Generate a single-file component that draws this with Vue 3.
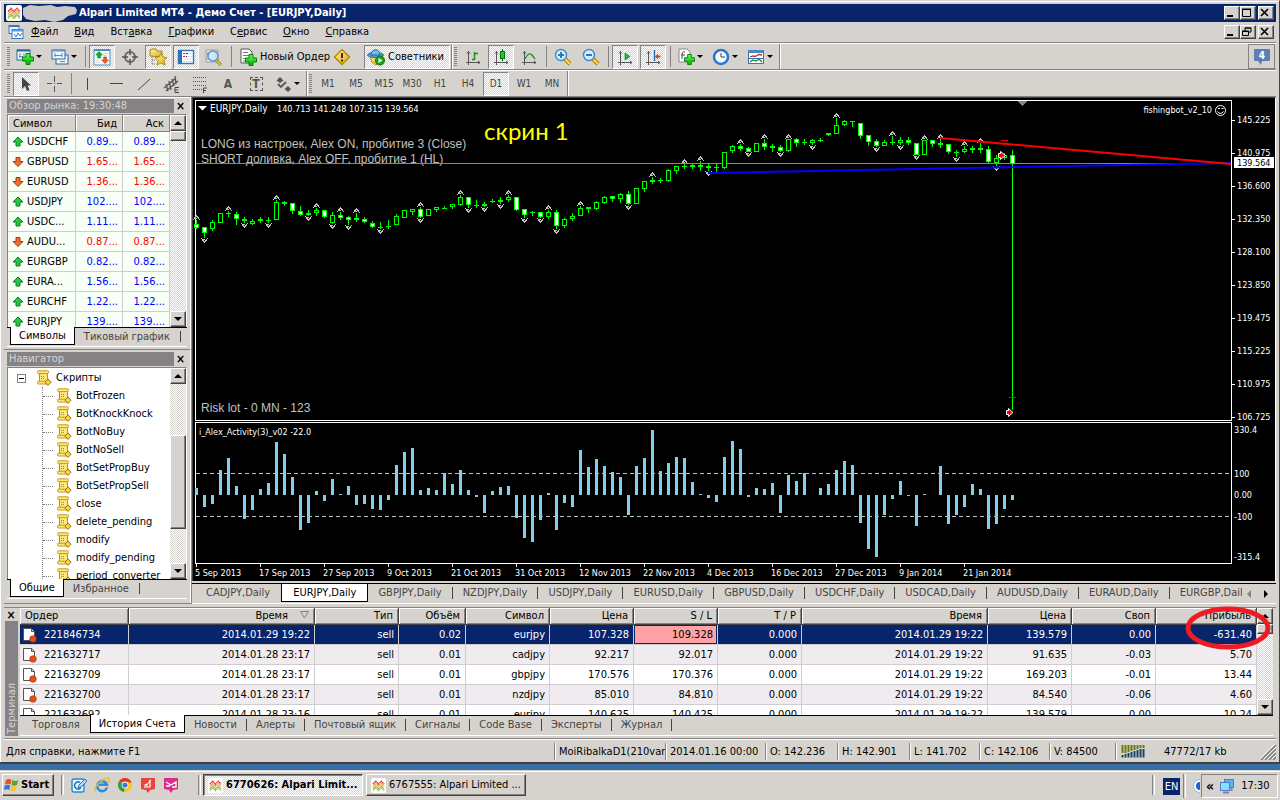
<script setup>
const menu = [
  ['', 'Ф', 'айл'], ['', 'В', 'ид'], ['Вст', 'а', 'вка'], ['', 'Г', 'рафики'],
  ['С', 'е', 'рвис'], ['', 'О', 'кно'], ['', 'С', 'правка'],
]
const timeframes = ['M1', 'M5', 'M15', 'M30', 'H1', 'H4', 'D1', 'W1', 'MN']
const drawTools = ['vline', 'hline', 'trend', 'channel', 'fibo', 'letter', 'label']
const quotes = [
  ['USDCHF', '0.89...', 1], ['GBPUSD', '1.65...', 0], ['EURUSD', '1.36...', 0],
  ['USDJPY', '102....', 1], ['USDC...', '1.11...', 1], ['AUDU...', '0.87...', 0],
  ['EURGBP', '0.82...', 1], ['EURA...', '1.56...', 1], ['EURCHF', '1.22...', 1],
  ['EURJPY', '139....', 1],
]
const scripts = [
  'BotFrozen', 'BotKnockKnock', 'BotNoBuy', 'BotNoSell', 'BotSetPropBuy', 'BotSetPropSell',
  'close', 'delete_pending', 'modify', 'modify_pending', 'period_converter',
]
const chartTabs = [
  'CADJPY', 'EURJPY', 'GBPJPY', 'NZDJPY', 'USDJPY', 'EURUSD',
  'GBPUSD', 'USDCHF', 'USDCAD', 'AUDUSD', 'EURAUD', 'EURGBP',
]
const columns = ['Ордер', 'Время', 'Тип', 'Объём', 'Символ', 'Цена', 'S / L', 'T / P', 'Время', 'Цена', 'Своп', 'Прибыль']
const orders = [
  ['221846734', '2014.01.29 19:22', 'sell', '0.02', 'eurjpy', '107.328', '109.328', '0.000', '2014.01.29 19:22', '139.579', '0.00', '-631.40'],
  ['221632717', '2014.01.28 23:17', 'sell', '0.01', 'cadjpy', '92.217', '92.017', '0.000', '2014.01.29 19:22', '91.635', '-0.03', '5.70'],
  ['221632709', '2014.01.28 23:17', 'sell', '0.01', 'gbpjpy', '170.576', '170.376', '0.000', '2014.01.29 19:22', '169.203', '-0.01', '13.44'],
  ['221632700', '2014.01.28 23:17', 'sell', '0.01', 'nzdjpy', '85.010', '84.810', '0.000', '2014.01.29 19:22', '84.540', '-0.06', '4.60'],
  ['221632692', '2014.01.28 23:16', 'sell', '0.01', 'eurjpy', '140.625', '140.425', '0.000', '2014.01.29 19:22', '139.579', '0.00', '10.24'],
]
const terminalTabs = ['Торговля', 'История Счета', 'Новости', 'Алерты', 'Почтовый ящик', 'Сигналы', 'Code Base', 'Эксперты', 'Журнал']

// Candles: type (w filled, h hollow, d doji), body top, body bottom, high, low, fractal marks; in thirds of a pixel from y 95
const candles = `w 386 398 375 403 u;w 395 415 395 428 d;h 382 402 375 407;h 353 383 353 383;d 354 357 347 365 u;w 357 373 352 390;d 373 378 365 383 d;h 379 386 373 389;h 373 379 367 383;d 376 379 367 383 d;h 320 374 315 374 u;w 322 328 317 333;w 325 349 325 356;w 348 359 333 363;d 353 359 346 363 d;h 346 355 338 362 u;w 346 365 346 368;h 360 385 352 388 d;w 361 370 352 374 u;w 367 375 362 390 d;h 369 375 355 382 u;w 371 380 366 385;w 385 397 379 399;d 396 399 380 402 d;d 392 395 376 402;h 364 391 357 391;h 346 369 346 369;h 343 352 343 359;w 342 365 337 370 ud;h 342 364 342 364;h 337 345 337 352;d 338 341 332 343;h 328 337 328 343;h 306 329 300 333 u;w 307 331 307 340 d;d 330 333 316 340;d 327 332 322 337 d;d 317 320 312 323;h 314 321 306 327 d;h 307 315 300 320 u;w 307 345 307 349;w 343 360 343 368 d;d 351 354 349 362;w 352 367 352 369 d;h 350 367 345 371 u;w 350 393 345 402 d;h 373 394 368 398;h 362 371 354 377;h 338 362 333 362 u;d 336 341 336 353;h 321 342 318 345;h 306 324 303 327;w 303 311 303 320;h 297 312 294 323;w 297 327 288 330 d;h 280 326 280 326;h 258 282 258 290;d 255 261 245 266 u;d 256 259 249 264;h 225 258 222 261;h 213 228 213 236;d 213 216 206 222 u;d 210 216 203 222;d 210 216 198 227 u;d 213 219 205 228 d;d 216 219 205 230;h 171 219 171 222;h 153 168 150 174;w 153 162 148 167 u;w 159 172 156 172 d;h 144 170 144 170;w 144 155 133 165 u;d 153 159 147 171;w 155 168 150 172 d;h 132 168 132 171 u;w 132 143 129 155;d 141 144 132 150;h 136 145 133 150 d;d 135 138 129 141;d 114 120 114 123;h 90 117 70 117 u;h 78 90 75 93;d 78 81 78 96;w 84 123 84 132;w 121 141 121 152;w 138 153 132 157 d;h 141 153 135 153;d 141 144 123 150 u;h 136 143 126 149 d;w 136 144 126 150;w 144 180 144 180 d;h 135 180 135 180 u;w 136 147 136 155;d 144 150 132 158 u;w 147 171 147 177;d 170 175 165 185 d;h 162 171 153 175 u;d 159 165 152 174;d 159 165 145 174 u;w 162 200 153 205;h 189 204 180 213 d;h 180 190 174 195;w 180 207 165 945`
  .split(';')
  .map((row, i) => {
    const [type, ...rest] = row.split(' ')
    const [top, bottom, high, low] = rest.slice(0, 4).map((v) => Math.round(Number(v) / 3) + 95)
    return { x: 196 + 8 * i, type, top, bottom: Math.max(bottom, top + 1), high, low, marks: rest[4] || '' }
  })

// End of each activity bar in thirds of a pixel; 300 is the zero level
const bars = '278 336 327 225 189 273 372 345 282 264 141 177 246 405 384 288 318 252 297 273 330 327 342 345 315 210 171 159 285 279 285 235 267 225 285 306 354 288 276 273 369 429 441 375 294 405 324 336 165 216 192 213 231 246 360 213 189 105 228 204 186 189 261 297 309 321 186 138 162 306 279 282 264 354 240 258 235 300 279 267 225 198 210 384 462 486 360 312 258 303 393 297 300 213 387 360 336 267 282 402 387 342 315'
  .split(' ')
  .map((v, i) => {
    const end = Math.round(Number(v) / 3) + 395
    return { x: 195 + 8 * i, y: Math.min(end, 495), h: Math.abs(end - 495) }
  })

const prices = ['145.225', '140.975', '136.600', '132.350', '128.100', '123.850', '119.475', '115.225', '110.975', '106.725']
const dates = [
  '5 Sep 2013', '17 Sep 2013', '27 Sep 2013', '9 Oct 2013', '21 Oct 2013', '31 Oct 2013', '12 Nov 2013',
  '22 Nov 2013', '4 Dec 2013', '16 Dec 2013', '27 Dec 2013', '9 Jan 2014', '21 Jan 2014',
]
</script>

<template>
  <svg class="defs" aria-hidden="true">
    <defs>
      <linearGradient id="gold" x1="0" y1="0" x2="1" y2="1"><stop offset="0" stop-color="#fff3a0" /><stop offset="1" stop-color="#e0aa10" /></linearGradient>
      <linearGradient id="green" x1="0" y1="0" x2="0" y2="1"><stop offset="0" stop-color="#5dff5d" /><stop offset="1" stop-color="#00b000" /></linearGradient>
      <symbol id="logo" viewBox="0 0 16 16">
        <rect width="16" height="16" rx="2" fill="#fff" />
        <path d="M2 6.500l3-3 3 3 3-3 3 3" fill="none" stroke="#e03020" stroke-width="1.600" stroke-dasharray="1.500 .5" />
        <path d="M2 9l3-3 3 3 3-3 3 3" fill="none" stroke="#f0902c" stroke-width="1.300" stroke-dasharray="1.500 .5" />
        <path d="M2 11.500l3-3 3 3 3-3 3 3M2 13.500l3-3 3 3 3-3 3 3" fill="none" stroke="#90b848" stroke-width="1.300" stroke-dasharray="1.500 .5" />
      </symbol>
      <symbol id="plus" viewBox="0 0 12 12"><path d="M4 .5h4v3.500h3.500v4H8v3.500H4V8H.5V4H4z" fill="url(#green)" stroke="#008400" /></symbol>
      <symbol id="newchart" viewBox="0 0 18 18">
        <rect x="1" y="2" width="13" height="10" fill="#eaf6ff" stroke="#31699c" /><path d="M1 2.500h13" stroke="#31699c" stroke-width="2" />
        <path d="M4 5v5M3 8.500h4M8 5v3" stroke="#688aa8" /><use href="#plus" x="6" y="5" width="12" height="12" />
      </symbol>
      <symbol id="profiles" viewBox="0 0 18 18">
        <rect x="5" y="7" width="12" height="9" fill="#eaf6ff" stroke="#31699c" /><rect x="1" y="2" width="13" height="9" fill="#eaf6ff" stroke="#31699c" /><path d="M1 2.500h13" stroke="#5f98cc" stroke-width="2" />
        <path d="M4 5v4M3 7.500h8M11 5v4M9 13.500h5" stroke="#688aa8" />
      </symbol>
      <symbol id="market" viewBox="0 0 18 18">
        <rect x="1" y="2" width="16" height="15" fill="#f4faff" stroke="#4a90cc" /><path d="M1 2h16" stroke="#4a90cc" stroke-width="2" /><path d="M10 5.500h5M10 7.500h4M3 12.500h3M3 14.500h4" stroke="#d0d8e0" />
        <path d="M6 3.500L2.800 7h2v3h2.600V7h2z" fill="#18b018" stroke="#087808" stroke-width=".6" /><path d="M12 15.500L8.800 12h2V9h2.600v3h2z" fill="#f06030" stroke="#a82800" stroke-width=".6" />
      </symbol>
      <symbol id="target" viewBox="0 0 18 18"><circle cx="9" cy="9" r="5" fill="none" stroke="#666" stroke-width="2" /><path d="M9 1v6M9 11v6M1 9h6M11 9h6" stroke="#555" stroke-width="1.500" /></symbol>
      <symbol id="folder" viewBox="0 0 18 18">
        <path d="M1 8V2l2-1h4l1 2h5v6z" fill="url(#gold)" stroke="#a88418" /><path d="M3 9v7M3 12h4M3 16h4" stroke="#666" stroke-dasharray="1 1" />
        <path d="M12 5l2 4 4 .5-3 3 1 4.500-4-2-4 2 1-4.500-3-3 4-.5z" fill="url(#gold)" stroke="#a87800" stroke-width=".8" />
      </symbol>
      <symbol id="terminal" viewBox="0 0 18 18"><rect x="1.500" y="2.500" width="15" height="13" fill="#fff" stroke="#2f76c0" stroke-width="1.400" /><path d="M3.500 3v12" stroke="#2870b8" stroke-width="3" /><path d="M6 5.500h10M6 8.500h10M6 11h10M6 13.500h10" stroke="#cfe0ff" /><path d="M6 5.500h2M6 8.500h2" stroke="#e02020" /><path d="M9 5.500h2M9 8.500h1" stroke="#333" /></symbol>
      <symbol id="tester" viewBox="0 0 18 18">
        <path d="M1 2h12v12H1z" fill="#eee" stroke="#999" /><path d="M3 4v8M2 6h3M11 3v7" stroke="#777" /><path d="M11 12l5 5" stroke="#a87818" stroke-width="3" /><path d="M11 12l5 5" stroke="#f4c838" stroke-width="1.200" />
        <circle cx="8" cy="8" r="5" fill="#c4e6fc" fill-opacity=".85" stroke="#5b92c8" stroke-width="1.300" />
      </symbol>
      <symbol id="neworder" viewBox="0 0 18 18"><path d="M2 1h8l3 3v11H2z" fill="#fff" stroke="#555" /><path d="M4 4.500h5M4 7.500h7M4 10.500h5M4 13h3" stroke="#777" /><use href="#plus" x="6" y="6" width="12" height="12" /></symbol>
      <symbol id="alert" viewBox="0 0 18 18"><path d="M9 1.500L16.500 9 9 16.500 1.500 9z" fill="url(#gold)" stroke="#c08800" stroke-width="1.500" stroke-linejoin="round" /><path d="M9 5v5M9 11.500v2" stroke="#333" stroke-width="2" /></symbol>
      <symbol id="advisor" viewBox="0 0 18 18">
        <path d="M3 8h11l-2 6-3 3-4-3z" fill="url(#gold)" stroke="#b88810" /><ellipse cx="8.500" cy="7" rx="8" ry="2.500" fill="#4f9fd0" stroke="#2b6b99" /><path d="M4 7c0-7 9-7 9 0z" fill="#72bce6" stroke="#2b6b99" />
        <circle cx="13" cy="12.500" r="4.500" fill="#18a818" stroke="#087008" /><path d="M11.500 10v5l4-2.500z" fill="#fff" />
      </symbol>
      <symbol id="axes" viewBox="0 0 18 18"><path d="M4.500 3v14M2 14.500h14M3 5.500l1.500-2 1.500 2M14 13l2 1.500-2 1.500" fill="none" stroke="#555" /></symbol>
      <symbol id="barchart" viewBox="0 0 18 18"><use href="#axes" /><path d="M10.500 4v8M8 11.500h2M11 5.500h3" stroke="#109010" stroke-width="1.400" /></symbol>
      <symbol id="candlechart" viewBox="0 0 18 18"><use href="#axes" /><path d="M10.500 1v12" stroke="#006800" /><rect x="8.500" y="3.500" width="4" height="7" fill="#20c840" stroke="#007800" /></symbol>
      <symbol id="linechart" viewBox="0 0 18 18"><use href="#axes" /><path d="M5 11c3-6 5-6 7-4l3 4" fill="none" stroke="#189030" stroke-width="1.300" /></symbol>
      <symbol id="lens" viewBox="0 0 18 18"><path d="M11 11l5 5" stroke="#a87818" stroke-width="4" /><path d="M11 11l5 5" stroke="#ffe048" stroke-width="2" /><circle cx="7" cy="7" r="5.500" fill="#d4efff" stroke="#3f88c8" stroke-width="1.400" /></symbol>
      <symbol id="zoomin" viewBox="0 0 18 18"><use href="#lens" /><path d="M7 4v6M4 7h6" stroke="#2f78b8" stroke-width="2" /></symbol>
      <symbol id="zoomout" viewBox="0 0 18 18"><use href="#lens" /><path d="M4 7h6" stroke="#2f78b8" stroke-width="2" /></symbol>
      <symbol id="scroll" viewBox="0 0 18 18"><use href="#axes" /><path d="M9 5l5 3.500-5 3.500z" fill="#20b840" stroke="#087818" stroke-width=".6" /></symbol>
      <symbol id="shift" viewBox="0 0 18 18"><use href="#axes" /><path d="M10.500 2v11" stroke="#2868a8" stroke-width="1.400" /><path d="M11 8.500l3-3v2h2.500v2H14v2z" fill="#d04818" /></symbol>
      <symbol id="indicator" viewBox="0 0 18 18"><path d="M2 1h8l3 3v10H2z" fill="#fff" stroke="#888" /><path d="M8 4c-3-1-3 1-3 7M4 7h4" fill="none" stroke="#444" /><use href="#plus" x="7" y="6" width="11" height="11" /></symbol>
      <symbol id="clock" viewBox="0 0 18 18"><circle cx="9" cy="9" r="7" fill="#f4faff" stroke="#2478d0" stroke-width="2.500" /><path d="M9 5v4h4" fill="none" stroke="#444" /></symbol>
      <symbol id="template" viewBox="0 0 18 18"><rect x="1.500" y="2.500" width="15" height="13" fill="#fff" stroke="#3078b8" /><path d="M1 3.500h16" stroke="#4888c8" stroke-width="3" /><path d="M3 9l3-1 2 .5 4-2 3 .5" fill="none" stroke="#c03020" stroke-width="1.300" /><path d="M1 10.500h16" stroke="#3078b8" /><path d="M3 14l3-2 3 1 3-2 3 3" fill="none" stroke="#208030" stroke-width="1.200" /></symbol>
      <symbol id="cursor" viewBox="0 0 18 18"><path d="M5 2v12l3-3 2 5 2.500-1-2-4.500H14z" fill="#444" /></symbol>
      <symbol id="cross" viewBox="0 0 18 18"><path d="M9.500 1v6M9.500 11v6M2 8.500h5M12 8.500h5" stroke="#555" /><path d="M9 8.500h1" stroke="#555" /></symbol>
      <symbol id="vline" viewBox="0 0 18 18"><path d="M8.500 3v12" stroke="#444" /></symbol>
      <symbol id="hline" viewBox="0 0 18 18"><path d="M3 8.500h13" stroke="#444" /></symbol>
      <symbol id="trend" viewBox="0 0 18 18"><path d="M3 15L15 4" stroke="#444" /></symbol>
      <symbol id="channel" viewBox="0 0 18 18"><path d="M1 13L13 3M3 16L15 6M3 9l2 7M6 6l2 9M9 4l2 7M12 1l1 8" stroke="#555" stroke-width="1.300" /><path d="M16 12.500h-4v5h4M12 15h3" fill="none" stroke="#444" /></symbol>
      <symbol id="fibo" viewBox="0 0 18 18"><path d="M2 2.500h14M2 6.500h14M2 10.500h14M2 14.500h9" stroke="#555" stroke-dasharray="1 1" /><path d="M12.500 18v-5H16M12.500 15.500H15" fill="none" stroke="#444" /></symbol>
      <symbol id="arrows" viewBox="0 0 18 18"><path d="M6 2l3.500 3.500L6 8 2.500 5.500zM14 11l3 3-3 3-3.500-3z" fill="#555" /><path d="M4 9l3 3 5-5" fill="none" stroke="#555" stroke-width="1.800" /></symbol>
      <symbol id="quoteup" viewBox="0 0 12 12"><path d="M6 1l5 5H8v4H4V6H1z" fill="#28c840" stroke="#107828" /></symbol>
      <symbol id="quotedown" viewBox="0 0 12 12"><path d="M6 10.500l5-5H8v-4H4v4H1z" fill="#f07030" stroke="#a83810" /></symbol>
      <symbol id="script" viewBox="0 0 16 16">
        <path d="M3.500 3h8v9h-8z" fill="#ffe878" stroke="#c09018" /><rect x="1.500" y=".8" width="11" height="2.800" rx="1" fill="#ffe878" stroke="#c89820" /><rect x="1.500" y="11.200" width="11" height="2.800" rx="1" fill="#ffe878" stroke="#c89820" />
        <path d="M5 6.500h4M5 8.500h4" stroke="#a88020" stroke-dasharray="1 1" /><path d="M12 9l3 3.200-3 3.200-3-3.200z" fill="#ffd838" stroke="#987010" />
      </symbol>
      <symbol id="order" viewBox="0 0 16 16"><path d="M1.500 1.500h8l3 3v9h-11z" fill="#fff" stroke="#555" /><path d="M9.500 1.500v3h3" fill="none" stroke="#555" /><circle cx="11" cy="12" r="3.300" fill="#e84c18" stroke="#a83008" stroke-width=".6" /></symbol>
      <symbol id="chartwin" viewBox="0 0 16 16"><rect x="1" y="1.500" width="10" height="8" fill="#eaf4ff" stroke="#3878c8" /><path d="M1 2h10" stroke="#3878c8" stroke-width="2" /><rect x="4" y="5.500" width="11" height="9" fill="#fff" stroke="#3878c8" /><path d="M4 6.500h11" stroke="#5898e0" stroke-width="2" /><path d="M6 10l2 3 2-4 2 3 2-3" fill="none" stroke="#3878c8" /></symbol>
      <symbol id="fractal" viewBox="-4 -3 9 6" overflow="visible"><path d="M0-3h1v1H0zM-1-2h3v1h-3zM-2-1h2v1h-2zM1-1h2v1H1zM-2 0h1v1h-1zM0 0h1v1H0zM2 0h1v1H2zM-3 1h1v1h-1zM3 1h1v1H3zM-1 0h1v1h-1zM1-1h1v1H1z" fill="#c0c0c0" /></symbol>
    </defs>
  </svg>

  <div class="desktop">
    <div class="window">
      <header class="title">
        <svg class="i16"><use href="#logo" /></svg>
        <svg class="smudge" viewBox="0 0 54 18"><path d="M0 4l7-3 9 1 12-1 6 2 8-1 10 1 2 3-1 4-8 2-5 4-9 2-9-2-10 1-9-2-3-4z" fill="#c8c8c8" /></svg>
        <h1>Alpari Limited MT4 - Демо Счет - [EURJPY,Daily]</h1>
        <div class="winbtns">
          <button aria-label="Свернуть"><svg viewBox="0 0 12 10"><path d="M2 8h6" stroke="#000" stroke-width="2" /></svg></button>
          <button aria-label="Развернуть"><svg viewBox="0 0 12 10"><path d="M1.500 1.500h8v7h-8zM1 1h9" fill="none" stroke="#000" /></svg></button>
          <button class="close" aria-label="Закрыть"><svg viewBox="0 0 12 10"><path d="M2 1l7 7M9 1L2 8" stroke="#000" stroke-width="1.600" /></svg></button>
        </div>
      </header>

      <nav class="menu">
        <svg class="i16"><use href="#chartwin" /></svg>
        <button v-for="m in menu" :key="m[2]">{{ m[0] }}<u>{{ m[1] }}</u>{{ m[2] }}</button>
        <div class="winbtns">
          <button aria-label="Свернуть график"><svg viewBox="0 0 12 10"><path d="M2 8h6" stroke="#000" stroke-width="2" /></svg></button>
          <button aria-label="Восстановить график"><svg viewBox="0 0 12 10"><path d="M4 4V1h6v4H8M1.500 4.500h6v4h-6zM1 4h7M4 1h6" fill="none" stroke="#000" /></svg></button>
          <button class="close" aria-label="Закрыть график"><svg viewBox="0 0 12 10"><path d="M2 1l7 7M9 1L2 8" stroke="#000" stroke-width="1.600" /></svg></button>
        </div>
      </nav>

      <div class="bars">
        <div class="bar">
          <div class="group">
            <i class="grip"></i>
            <button class="tool drop" aria-label="Новый график"><svg><use href="#newchart" /></svg><i class="caret"></i></button>
            <button class="tool drop" aria-label="Профили"><svg><use href="#profiles" /></svg><i class="caret"></i></button>
            <i class="sep"></i>
            <button class="tool on" aria-label="Обзор рынка"><svg><use href="#market" /></svg></button>
            <button class="tool" aria-label="Окно данных"><svg><use href="#target" /></svg></button>
            <button class="tool on" aria-label="Навигатор"><svg><use href="#folder" /></svg></button>
            <button class="tool on" aria-label="Терминал"><svg><use href="#terminal" /></svg></button>
            <button class="tool" aria-label="Тестер"><svg><use href="#tester" /></svg></button>
            <i class="sep"></i>
            <button class="tool order"><svg><use href="#neworder" /></svg>Новый Ордер</button>
            <button class="tool" aria-label="Редактор"><svg><use href="#alert" /></svg></button>
            <button class="tool on advisor"><svg><use href="#advisor" /></svg>Советники</button>
          </div>
          <div class="group">
            <i class="grip"></i>
            <button class="tool" aria-label="Бары"><svg><use href="#barchart" /></svg></button>
            <button class="tool on" aria-label="Свечи"><svg><use href="#candlechart" /></svg></button>
            <button class="tool" aria-label="Линия"><svg><use href="#linechart" /></svg></button>
            <i class="sep"></i>
            <button class="tool" aria-label="Увеличить"><svg><use href="#zoomin" /></svg></button>
            <button class="tool" aria-label="Уменьшить"><svg><use href="#zoomout" /></svg></button>
            <i class="sep"></i>
            <button class="tool on" aria-label="Автопрокрутка"><svg><use href="#scroll" /></svg></button>
            <button class="tool on" aria-label="Сдвиг графика"><svg><use href="#shift" /></svg></button>
            <i class="sep"></i>
            <button class="tool drop" aria-label="Индикаторы"><svg><use href="#indicator" /></svg><i class="caret"></i></button>
            <button class="tool drop" aria-label="Периоды"><svg><use href="#clock" /></svg><i class="caret"></i></button>
            <button class="tool drop" aria-label="Шаблоны"><svg><use href="#template" /></svg><i class="caret"></i></button>
          </div>
          <button class="chat" aria-label="Сообщения"><svg viewBox="0 0 18 18"><path d="M1 2q0-1 1-1h14q1 0 1 1v10q0 1-1 1H9l-1 4-3-4H2q-1 0-1-1z" fill="#5b7fb5" /><text x="9" y="11">4</text></svg></button>
        </div>
        <div class="bar second">
          <div class="group">
            <i class="grip"></i>
            <button class="tool on" aria-label="Курсор"><svg><use href="#cursor" /></svg></button>
            <button class="tool" aria-label="Перекрестие"><svg><use href="#cross" /></svg></button>
            <i class="sep"></i>
            <button v-for="t in drawTools" :key="t" class="tool" :aria-label="t">
              <b v-if="t === 'letter'">A</b>
              <b v-else-if="t === 'label'" class="tbox">T</b>
              <svg v-else><use :href="'#' + t" /></svg>
            </button>
            <button class="tool drop" aria-label="Стрелки"><svg><use href="#arrows" /></svg><i class="caret"></i></button>
          </div>
          <div class="group">
            <i class="grip"></i>
            <button v-for="t in timeframes" :key="t" class="tool tf" :class="{ on: t === 'D1' }">{{ t }}</button>
          </div>
        </div>
      </div>

      <main class="work">
        <aside class="side">
          <section class="panel">
            <div class="phead"><h2>Обзор рынка: 19:30:48</h2><button aria-label="Закрыть обзор рынка">×</button></div>
            <div class="plist market">
              <div class="scrolled">
                <table class="quotes">
                  <colgroup><col class="c1" /><col class="c2" /><col class="c3" /></colgroup>
                  <thead><tr><th>Символ</th><th>Бид</th><th>Аск</th></tr></thead>
                  <tbody>
                    <tr v-for="q in quotes" :key="q[0]" :class="q[2] ? 'up' : 'down'">
                      <td><svg><use :href="q[2] ? '#quoteup' : '#quotedown'" /></svg>{{ q[0] }}</td><td>{{ q[1] }}</td><td>{{ q[1] }}</td>
                    </tr>
                  </tbody>
                </table>
              </div>
              <div class="vscroll"><button aria-label="Вверх"><i class="up"></i></button><i class="thumb small"></i><span></span><button aria-label="Вниз"><i class="dn"></i></button></div>
            </div>
            <div class="ptabs"><button class="active">Символы</button><button>Тиковый график</button></div>
          </section>
          <section class="panel nav">
            <div class="phead"><h2>Навигатор</h2><button aria-label="Закрыть навигатор">×</button></div>
            <div class="plist">
              <div class="scrolled">
                <div class="tree">
                  <div class="root"><i class="minus"></i><svg><use href="#script" /></svg>Скрипты</div>
                  <ul><li v-for="s in scripts" :key="s"><svg><use href="#script" /></svg>{{ s }}</li></ul>
                </div>
              </div>
              <div class="vscroll"><button aria-label="Вверх по дереву"><i class="up"></i></button><span class="gap"></span><i class="thumb"></i><span></span><button aria-label="Вниз по дереву"><i class="dn"></i></button></div>
            </div>
            <div class="ptabs"><button class="active">Общие</button><button>Избранное</button></div>
          </section>
        </aside>

        <section class="chartbox">
          <svg class="chart" viewBox="193 98 1082 483" role="img" aria-label="EURJPY,Daily">
            <rect x="193" y="98" width="1082" height="483" fill="#000" />
            <g class="note">
              <text x="201" y="148">LONG из настроек, Alex ON, пробитие 3 (Close)</text>
              <text x="201" y="163">SHORT доливка, Alex OFF, пробитие 1 (HL)</text>
              <text x="201" y="412">Risk lot - 0 MN - 123</text>
            </g>
            <text class="shot" x="484" y="140">скрин 1</text>
            <g class="crisp">
              <path d="M195 100h1037v1H195zM195 420h1037v1H195zM195 422h1037v1H195zM195 563h1037v1H195zM195 100h1v321h-1zM195 422h1v142h-1zM1231 100h1v321h-1zM1231 422h1v142h-1z" fill="#fff" />
              <path d="M196 163h1035v1H196z" fill="#778899" />
              <path d="M1018 101h9l-4.500 5z" fill="#778899" />
              <template v-for="c in candles" :key="c.x">
                <rect :x="c.x" :y="c.high" width="1" :height="c.low - c.high" fill="#0f0" />
                <rect :x="c.x - 2" :y="c.top" width="5" :height="c.bottom - c.top" fill="#0f0" />
                <rect v-if="c.type !== 'd' && c.bottom - c.top > 2" :x="c.x - 1" :y="c.top + 1" width="3" :height="c.bottom - c.top - 2" :fill="c.type === 'w' ? '#fff' : '#000'" />
                <use v-if="c.marks.includes('u')" href="#fractal" :x="c.x - 4" :y="c.high - 5" width="9" height="6" />
                <g v-if="c.marks.includes('d')" :transform="`translate(0 ${2 * c.low + 5}) scale(1 -1)`"><use href="#fractal" :x="c.x - 4" :y="c.low" width="9" height="6" /></g>
              </template>
              <path d="M1001 140h7v1h-7zM1009 397h7v1h-7z" fill="#f00" />
            </g>
            <g fill="none" stroke-width="2"><path d="M708 173L1231 163" stroke="#00f" /><path d="M940 138L1231 164" stroke="#f00" /></g>
            <g fill="#f00" stroke="#fff">
              <path d="M998.500 153.500h2v-2l5 4-5 4v-2h-2z" /><path d="M1006.500 410.500h2v-2l4.500 4-4.500 4v-2h-2z" />
            </g>
            <path d="M198 106h9l-4.500 4.500z" fill="#fff" />
            <path d="M196 473.500h1035M196 516.500h1035" stroke="#c0c0c0" stroke-dasharray="4 3" />
            <g class="crisp" fill="#87ceeb"><rect v-for="b in bars" :key="b.x" :x="b.x" :y="b.y" width="3" :height="b.h" /></g>
            <g class="ctext">
              <text class="wide" x="210" y="112">EURJPY,Daily</text><text x="277" y="112">140.713 141.248 107.315 139.564</text>
              <text x="1212" y="113" text-anchor="end">fishingbot_v2_10</text>
              <text x="199" y="435">i_Alex_Activity(3)_v02 -22.0</text>
              <text v-for="(p, i) in prices" :key="p" x="1237" :y="123 + 33 * i">{{ p }}</text>
              <text x="1234" y="433">330.4</text><text x="1234" y="477">100</text><text x="1234" y="498">0.00</text><text x="1234" y="520">-100</text><text x="1234" y="560">-315.4</text>
              <text v-for="(d, i) in dates" :key="d" :x="195 + 64 * i" y="576">{{ d }}</text>
            </g>
            <g fill="none" stroke="#fff"><circle cx="1220.500" cy="110.500" r="5" /><path d="M1217.500 111.500q3 4 6 0M1218 108.500h2M1221.500 108.500h2" /></g>
            <g class="crisp" fill="#fff">
              <rect v-for="(p, i) in prices" :key="p" x="1232" :y="120 + 33 * i" width="3" height="1" />
              <rect v-for="(d, i) in dates" :key="d" :x="196 + 64 * i" y="564" width="1" height="3" />
              <rect x="1234" y="157" width="40" height="11" />
            </g>
            <text class="now" x="1237" y="166">139.564</text>
          </svg>
          <div class="ctabs">
            <div class="ctlist"><button v-for="t in chartTabs" :key="t" :class="{ active: t === 'EURJPY' }">{{ t }},Daily</button></div>
            <button class="arr off" aria-label="Предыдущие вкладки"></button><button class="arr" aria-label="Следующие вкладки"></button>
          </div>
        </section>
      </main>

      <section class="terminal">
        <div class="strip"><button aria-label="Закрыть терминал">×</button><h2>Терминал</h2></div>
        <div class="tbody">
          <div class="tview">
            <div class="scrolled">
              <table class="orders">
                <colgroup>
                  <col class="w109" /><col class="w186" /><col class="w84" /><col class="w67" /><col class="w84" /><col class="w84" /><col class="w84" /><col class="w84" /><col class="w186" /><col class="w84" /><col class="w84" /><col />
                </colgroup>
                <thead><tr><th v-for="(c, i) in columns" :key="i">{{ c }}<svg v-if="i === 1" viewBox="0 0 9 8"><path d="M.5.5h8L4.500 7z" fill="#d6d3ce" stroke="#848284" /></svg></th></tr></thead>
                <tbody>
                  <tr v-for="(o, r) in orders" :key="o[0]" :class="{ sel: r === 0 }">
                    <td v-for="(v, i) in o" :key="i" :class="{ hit: r === 0 && i === 6 }"><svg v-if="i === 0"><use href="#order" /></svg>{{ v }}</td>
                  </tr>
                </tbody>
              </table>
            </div>
            <div class="vscroll"><button aria-label="Вверх по истории"><i class="up"></i></button><i class="thumb small"></i><span></span><button aria-label="Вниз по истории"><i class="dn"></i></button></div>
            <svg class="ring" viewBox="0 0 86 44"><ellipse cx="43" cy="22" rx="40" ry="19" fill="none" stroke="#ed1c24" stroke-width="5" /></svg>
          </div>
          <div class="ttabs"><button v-for="t in terminalTabs" :key="t" :class="{ active: t === 'История Счета' }">{{ t }}</button></div>
        </div>
      </section>

      <footer class="status">
        <span class="help">Для справки, нажмите F1</span>
        <span class="s111">MoiRibalkaD1(210var</span><span class="s101">2014.01.16 00:00</span><span class="s71">O: 142.236</span><span class="s71">H: 142.901</span><span class="s70">L: 141.702</span><span class="s70">C: 142.106</span><span class="s66">V: 84500</span>
        <span class="net"><svg viewBox="0 0 24 13"><path d="M1.500 0v8M4.500 0v8M7.500 0v7M10.500 0v6M13.500 0v5M16.500 0v4M19.500 0v3M22.500 0v3" stroke="#6b7a10" stroke-width="2" /><path d="M1.500 10v2.500M4.500 9v3.500M7.500 8v4.500M10.500 7v5.500M13.500 6v6.500M16.500 5v7.500M19.500 4v8.500M22.500 4v8.500" stroke="#184868" stroke-width="2" /></svg>47772/17 kb</span>
        <svg class="sizer" viewBox="0 0 16 16"><path d="M1 16L16 1M5 16L16 5M9 16l7-7M13 16l3-3" stroke="#848284" stroke-width="1.600" /><path d="M0 15L15 0M4 15L16 3M8 15l8-8M12 15l4-4" stroke="#fff" /></svg>
      </footer>
    </div>

    <div class="taskbar">
      <button class="start">
        <svg viewBox="0 0 16 16"><path d="M2 3q3-2 5.500 0L6.500 7.500Q4 6 1 7.500z" fill="#e8501c" /><path d="M8.500 3q3 2 6 0L13 8q-3 1.500-5.500 0z" fill="#58a830" /><path d="M.8 8.500q3-1.500 5.500 0L5.200 13Q3 11.500 0 13z" fill="#3c70d8" /><path d="M7.300 9q3 1.500 5.500 0l-1.300 4.500q-3 1.500-5.300 0z" fill="#f8c818" /></svg>Start
      </button>
      <i class="tsep"></i>
      <div class="quick">
        <a href="#" aria-label="Рабочий стол"><svg viewBox="0 0 16 16"><rect x="1" y="2" width="12" height="13" rx="2" fill="#e8f4ff" stroke="#2888c8" stroke-width="1.400" /><path d="M9 5.500a3.500 3.500 0 1 0 1 5" fill="none" stroke="#2878c0" stroke-width="1.600" /><path d="M7 11l1-3 6-6 2 2-6 6z" fill="#a8dcf8" stroke="#2878c0" /></svg></a>
        <a href="#" aria-label="Internet Explorer"><svg viewBox="0 0 16 16"><path d="M13 10.500A5 5 0 1 1 13 7.800H5" fill="none" stroke="#2890e0" stroke-width="2.600" /><path d="M1 14.500C-1 10 10 0 15 1.500c1 1 0 3-1 4" fill="none" stroke="#f0b820" stroke-width="1.400" /></svg></a>
        <a href="#" aria-label="Chrome"><svg viewBox="0 0 16 16"><circle cx="8" cy="8" r="7" fill="#f8c820" /><path d="M8 8L1.900 4.500A7 7 0 0 1 14.500 5.500H8z" fill="#e03828" /><path d="M8 8L1.900 4.500A7 7 0 0 0 7 15z" fill="#28a048" /><circle cx="8" cy="8" r="3.400" fill="#fff" /><circle cx="8" cy="8" r="2.600" fill="#3878d8" /></svg></a>
        <a href="#" aria-label="Редактор"><svg viewBox="0 0 16 16"><path d="M1 1h14v11l-5 1-2 3-2-3-5-1z" fill="#e84438" /><path d="M5 11V8l2-1v4M9 4l2-1M8 6l2-1v5H8" fill="none" stroke="#fff" stroke-width="1.200" /></svg></a>
        <a href="#" aria-label="Метки"><svg viewBox="0 0 16 16"><path d="M1 1h14v11l-5 1-2 3-2-3-5-1z" fill="#e02888" /><path d="M3 5l5 3 5-3v5H9M3 9h4" fill="none" stroke="#fff" stroke-width="1.300" /></svg></a>
      </div>
      <i class="tsep"></i>
      <button class="task on"><svg><use href="#logo" /></svg><span>6770626: Alpari Limit...</span></button>
      <button class="task"><svg><use href="#logo" /></svg><span>6767555: Alpari Limited ...</span></button>
      <i class="tsep far"></i>
      <button class="lang">EN</button>
      <i class="tsep near"></i>
      <svg class="half" viewBox="0 0 8 14"><circle cx="8" cy="7" r="6.500" fill="#fff" stroke="#8cb8e8" /><circle cx="8" cy="7" r="4" fill="#2060d0" /></svg>
      <div class="tray">
        <button aria-label="Показать значки">«</button>
        <svg viewBox="0 0 16 16"><rect x="5.500" y="1.500" width="9" height="8" fill="#50b8f8" stroke="#5878c8" /><rect x="1.500" y="4.500" width="9" height="8" fill="#88e0ff" stroke="#5878c8" /><path d="M4 14.500h6M12.500 10v3" stroke="#8080c0" stroke-width="2" /></svg>
        <time>17:30</time>
      </div>
    </div>
  </div>
</template>

<style>
body { background: #396da5; }
</style>

<style scoped>
* { box-sizing: border-box; }
.defs { position: absolute; width: 0; height: 0; }
.desktop { min-height: 100vh; display: flex; flex-direction: column; overflow: hidden; font: 11px/14px Tahoma, "DejaVu Sans Condensed", "DejaVu Sans", sans-serif; color: #000; background: #396da5; }
button { font: inherit; color: inherit; background: none; border: 0; padding: 0; margin: 0; white-space: nowrap; }
h1, h2 { margin: 0; font-size: inherit; font-weight: normal; white-space: nowrap; }
svg { display: block; flex: none; }
table { border-collapse: separate; border-spacing: 0; table-layout: fixed; width: 100%; }
i { display: block; flex: none; }
.i16 { width: 16px; height: 16px; }

.window { flex: 1; display: flex; flex-direction: column; background: #d6d3ce; padding: 3px 3px 0 4px; margin-bottom: 6px; border-top: 1px solid #d6d3ce; border-right: 1px solid #424142; border-bottom: 2px solid #424142; box-shadow: inset 1px 1px #fff; }
.title { display: flex; align-items: center; height: 18px; padding-left: 2px; background: #08246b; color: #fff; }
.title h1 { font-weight: bold; margin-left: 2px; }
.smudge { width: 54px; height: 18px; margin-left: 1px; }
.winbtns { display: flex; margin-left: auto; padding-right: 2px; }
.winbtns button { width: 16px; height: 14px; background: #d6d3ce; border: 1px solid; border-color: #fff #424142 #424142 #fff; box-shadow: inset -1px -1px #848284; }
.winbtns svg { width: 12px; height: 10px; }
.winbtns .close { margin-left: 2px; }
.menu { display: flex; align-items: center; height: 20px; padding-left: 4px; }
.menu > button { padding: 0 8px; }
.menu > .i16 + button { padding-left: 7px; }
.bars { border-top: 1px solid #848284; }
.bar { display: flex; height: 27px; border-top: 1px solid #fff; border-bottom: 1px solid #848284; }
.bar.second { height: 26px; border-bottom: 0; }
.group { display: flex; align-items: center; border-right: 1px solid #848284; padding-left: 3px; box-shadow: 1px 0 #fff; }
.group + .group { margin-left: 1px; padding-left: 1px; }
.grip { width: 3px; height: 19px; margin-right: 3px; background: repeating-linear-gradient(#848284 0 1px, #d6d3ce 1px 2px); }
.sep { width: 1px; height: 21px; background: #848284; margin: 0 3px 0 2px; }
.tool { display: flex; align-items: center; justify-content: center; width: 26px; height: 24px; margin-right: 2px; flex: none; border: 1px solid transparent; }
.tool svg { width: 18px; height: 18px; }
.tool.on { background: repeating-conic-gradient(#fff 0 25%, #d6d3ce 0 50%) 0 0 / 2px 2px; border-color: #848284 #fff #fff #848284; }
.tool.drop { width: 33px; justify-content: space-between; padding: 0 3px 0 2px; }
.caret { width: 0; height: 0; border: 3px solid transparent; border-top-color: #000; border-bottom: 0; }
.tool.order { width: 92px; justify-content: flex-start; gap: 3px; padding-left: 3px; }
.tool.advisor { width: 86px; justify-content: flex-start; gap: 3px; padding-left: 2px; margin-left: 7px; margin-right: 1px; }
.tool b { font-size: 12px; color: #555; }
.tool .tbox { border: 1px dashed #555; width: 13px; line-height: 12px; }
.tf { color: #444; font-size: 10px; }
.chat { margin-left: auto; width: 27px; height: 25px; border: 1px solid #848284; display: flex; align-items: center; justify-content: center; margin-right: 1px; }
.chat svg { width: 18px; height: 18px; }
.chat text { font-size: 10px; font-weight: bold; fill: #fff; text-anchor: middle; }

.work { flex: 1; display: grid; grid-template-columns: 187px 1fr; }
.side { display: flex; flex-direction: column; border-top: 1px solid #848284; border-bottom: 1px solid #848284; }
.panel { display: flex; flex-direction: column; padding: 1px 3px 2px; border-top: 1px solid #fff; border-right: 1px solid #fff; }
.panel.nav { flex: 1; border-top: 1px solid #848284; padding: 2px 3px 4px; }
.phead { display: flex; height: 15px; padding-bottom: 1px; }
.phead h2 { flex: 1; background: #848284; color: #d6d3ce; padding-left: 2px; line-height: 13px; overflow: hidden; }
.phead button { width: 13px; font-weight: bold; font-size: 12px; line-height: 12px; }
.plist { display: flex; border: 1px solid #848284; border-right-color: #fff; border-bottom: 0; background: #fff; }
.plist.market { height: 213px; }
.nav .plist { flex: 1 1 0; height: 0; }
.scrolled { flex: 1; min-width: 0; overflow: hidden; }
.c1 { width: 68px; } .c2 { width: 47px; }
th { font-weight: normal; background: #d6d3ce; padding: 0; }
.quotes th { height: 17px; text-align: right; padding: 1px 5px 0 0; border-right: 1px solid #848284; border-bottom: 1px solid #848284; box-shadow: inset 1px 1px #fff; }
.quotes th:first-child { text-align: left; padding-left: 5px; }
.quotes td { height: 20px; padding: 0 4px 0 0; text-align: right; background: #f7fff7; border-bottom: 1px solid #d0cdd0; border-right: 1px solid #d0cdd0; }
.quotes td:first-child { display: flex; align-items: center; gap: 3px; padding: 0 0 0 4px; color: #000; }
.quotes svg { width: 12px; height: 12px; }
.up td { color: #00f; }
.down td { color: #f00; }
.vscroll { width: 16px; flex: none; display: flex; flex-direction: column; background: repeating-conic-gradient(#fff 0 25%, #d6d3ce 0 50%) 0 0 / 2px 2px; }
.vscroll span { flex: 1; }
.vscroll .gap { flex: none; height: 51px; }
.vscroll button, .thumb { height: 16px; flex: none; background: #d6d3ce; border: 1px solid; border-color: #fff #424142 #424142 #fff; box-shadow: inset -1px -1px #848284; display: flex; align-items: center; justify-content: center; }
.thumb { height: 94px; }
.thumb.small { height: 10px; }
.vscroll .up, .vscroll .dn { width: 0; height: 0; border: 4px solid transparent; border-top: 0; border-bottom-color: #000; }
.vscroll .dn { border: 4px solid transparent; border-bottom: 0; border-top-color: #000; }
.ptabs, .ttabs { display: flex; border-top: 1px solid #000; }
.ptabs { height: 20px; padding-left: 3px; border-bottom: 1px solid #fff; }
.ptabs button, .ttabs button, .ctabs button { color: #444; position: relative; flex: none; }
.ptabs button { height: 17px; padding: 0 11px 0 9px; }
.ptabs button:not(.active)::after, .ttabs button:not(.active)::after, .ctlist button:not(.active)::after { content: ""; position: absolute; right: 0; top: 3px; bottom: 3px; width: 1px; background: #444; }
.ttabs button:first-child::after, .ctlist button:first-child::after { display: none; }
.ptabs .active, .ttabs .active, .ctabs .active { background: #fff; color: #000; border: 1px solid #000; border-top: 0; margin-top: -1px; }
.ptabs .active { height: 18px; padding: 0 8px; }
.tree { padding-top: 1px; }
.root { display: flex; align-items: center; height: 18px; padding-left: 9px; }
.root svg, .tree li svg { width: 16px; height: 16px; margin-right: 4px; }
.minus { width: 9px; height: 9px; margin-right: 10px; border: 1px solid #848284; background: linear-gradient(#000, #000) center / 5px 1px no-repeat; }
.tree ul { list-style: none; margin: 0 0 0 34px; padding: 0; border-left: 1px dotted #848284; }
.tree li { display: flex; align-items: center; height: 18px; }
.tree li::before { content: ""; width: 10px; border-top: 1px dotted #848284; margin-right: 3px; }

.chartbox { min-width: 0; display: flex; flex-direction: column; border-left: 1px solid #848284; border-top: 1px solid #848284; }
.chart { width: calc(100% - 2px); height: auto; border-left: 1px solid #424142; border-top: 1px solid #424142; border-right: 1px solid #fff; box-sizing: content-box; }
.crisp { shape-rendering: crispEdges; }
.note { font: 12px "Liberation Sans", Arial, sans-serif; fill: #c0c0c0; }
.shot { font: 24px Lato, "Open Sans", sans-serif; fill: #ff0; }
.ctext, .now { font: 9px "DejaVu Sans Condensed", "DejaVu Sans", sans-serif; fill: #fff; }
.ctext .wide { font-size: 10px; }
.now { fill: #000; }
.ctabs { display: flex; height: 21px; margin-top: 2px; border-top: 1px solid #000; border-bottom: 1px solid #fff; }
.ctlist { flex: 1; display: flex; min-width: 0; overflow: hidden; padding-left: 4px; }
.ctlist button { height: 18px; padding: 0 11px 0 10px; }
.ctlist .active { margin-top: 0; padding: 0 11px; }
.arr { width: 17px; }
.arr::before { content: ""; display: block; margin-left: 5px; width: 0; border: 4px solid transparent; border-left-color: #000; border-right: 0; }
.arr.off::before { border: 4px solid transparent; border-right-color: #848284; border-left: 0; }

.terminal { display: flex; padding: 0 3px 2px 0; border-bottom: 1px solid #848284; border-top: 1px solid #848284; margin-top: 3px; }
.strip { width: 14px; display: flex; flex-direction: column; align-items: center; margin-right: 2px; }
.strip button { font-weight: bold; font-size: 12px; line-height: 12px; height: 13px; }
.strip h2 { flex: 1; width: 13px; background: #848284; color: #d6d3ce; writing-mode: vertical-rl; transform: rotate(180deg); line-height: 13px; padding-top: 2px; }
.tbody { flex: 1; min-width: 0; display: flex; flex-direction: column; }
.tview { display: flex; height: 107px; background: #fff; position: relative; }
.ring { position: absolute; width: 86px; height: 44px; right: 2px; top: -2px; }
.w109 { width: 109px; } .w186 { width: 186px; } .w84 { width: 84px; } .w67 { width: 67px; }
.orders th { height: 17px; text-align: right; padding: 0 5px 0 0; border-right: 1px solid #424142; border-bottom: 1px solid #424142; box-shadow: inset 1px 1px #fff, inset -1px -1px #848284; }
.orders th:first-child { text-align: left; padding-left: 5px; }
.orders th svg { display: inline-block; width: 9px; height: 8px; margin: 0 0 0 12px; }
.orders td { height: 20px; padding: 0 4px 0 0; text-align: right; border-right: 1px solid #d0cdd0; border-bottom: 1px solid #d0cdd0; white-space: nowrap; }
.orders td:first-child { display: flex; align-items: center; gap: 6px; padding-left: 2px; }
.orders td svg { width: 16px; height: 16px; }
.orders tr:nth-child(even) td { background: #efebef; }
.orders .sel td { background: #08246b; color: #fff; }
.orders .sel .hit { background: #ffa2a5; color: #000; box-shadow: inset 0 0 0 1px #08246b; }
.ttabs { height: 21px; border-bottom: 1px solid #fff; }
.ttabs button { height: 18px; padding: 0 10px 0 9px; }
.ttabs button:first-child { padding: 0 10px 0 12px; }
.ttabs .active { padding: 0 8px; }

.status { display: flex; align-items: center; height: 23px; border-top: 1px solid #fff; position: relative; }
.status span { height: 17px; line-height: 17px; border-left: 1px solid #848284; box-shadow: inset 1px 0 #fff; padding-left: 4px; white-space: nowrap; overflow: hidden; }
.status .help { flex: 1; border: 0; box-shadow: none; padding-left: 2px; }
.status .s111 { width: 111px; } .status .s101 { width: 100px; } .status .s71 { width: 72px; } .status .s70 { width: 70px; } .status .s66 { width: 66px; }
.status .net { width: 161px; display: flex; align-items: center; gap: 19px; padding-left: 5px; }
.net svg { width: 24px; height: 13px; }
.sizer { position: absolute; right: 0; bottom: 2px; width: 16px; height: 16px; }

.taskbar { display: flex; align-items: flex-start; height: 30px; background: #d6d3ce; box-shadow: inset 0 1px #d6d3ce, inset 0 2px #fff; padding: 4px 2px 0; }
.start, .task { display: flex; align-items: center; height: 22px; border: 1px solid; border-color: #fff #424142 #424142 #fff; box-shadow: inset -1px -1px #848284; }
.start { width: 52px; font-weight: bold; gap: 1px; padding-left: 1px; }
.start svg { width: 16px; height: 16px; }
.tsep { width: 3px; height: 20px; margin: 1px 2px 0 7px; border-left: 1px solid #848284; border-right: 1px solid #fff; }
.quick { display: flex; gap: 7px; padding: 3px 12px 0 5px; }
.quick svg { width: 16px; height: 16px; }
.task { width: 160px; margin-right: 3px; padding-left: 4px; gap: 3px; overflow: hidden; }
.task svg { width: 15px; height: 15px; }
.task.on { font-weight: bold; background: repeating-conic-gradient(#fff 0 25%, #d6d3ce 0 50%) 0 0 / 2px 2px; border-color: #424142 #fff #fff #424142; box-shadow: inset 1px 1px #848284; }
.tsep.far { margin-left: auto; margin-right: 8px; }
.lang { background: #08246b; color: #fff; width: 17px; height: 17px; margin-top: 4px; }
.tsep.near { margin: 0 6px 0 3px; height: 24px; }
.half { width: 8px; height: 14px; margin: 5px 1px 0 0; }
.tray { display: flex; align-items: center; width: 77px; height: 24px; border: 1px solid; border-color: #848284 #fff #fff #848284; padding-left: 4px; gap: 5px; }
.tray button { font-weight: bold; font-size: 14px; }
.tray svg { width: 16px; height: 16px; }
.tray time { margin-left: 1px; }
</style>
